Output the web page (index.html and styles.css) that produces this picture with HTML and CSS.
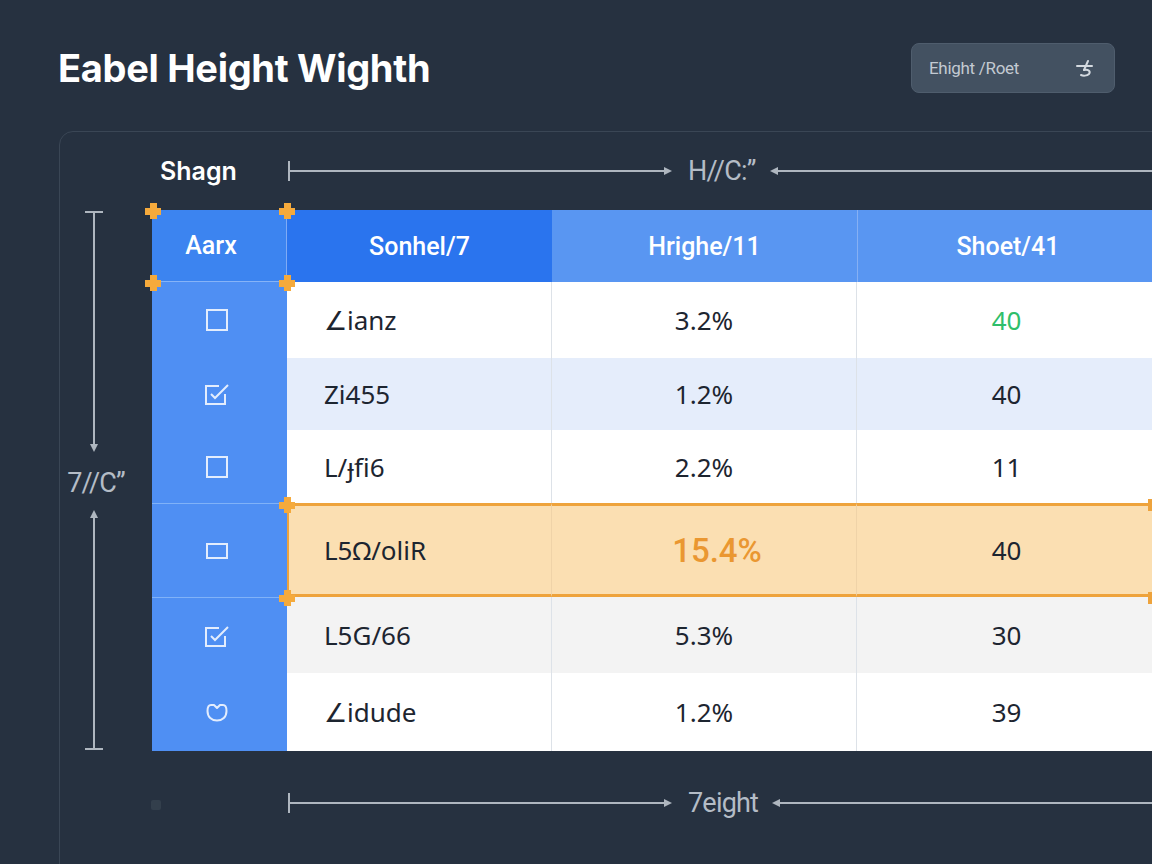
FILE: index.html
```html
<!DOCTYPE html>
<html>
<head>
<meta charset="utf-8">
<link rel="stylesheet" href="styles.css">
</head>
<body>
<div class="page">
  <header class="topbar">
    <h1 class="title">Eabel Height Wighth</h1>
    <button class="pill">
      <span class="pill-text">Ehight /Roet</span>
      <svg class="pill-icon" width="22" height="22" viewBox="0 0 22 22" fill="none" stroke="#d4dae0" stroke-width="2" stroke-linecap="round" stroke-linejoin="round">
        <path d="M3 9 H8"/>
        <path d="M8 9 H18"/>
        <path d="M14 4 L10 13"/>
        <path d="M10 13 C14 12 17 14 15 17 C13 19 9 19 7 18"/>
      </svg>
    </button>
  </header>

  <section class="panel">
    <div class="corner"></div>
    <div class="dimrow dim-top">
      <span class="dimlabel">Shagn</span>
      <div class="hdim">
        <i class="tick"></i><i class="line fixed"></i><i class="head-r"></i>
        <span class="dimtext">H//C:”</span>
        <i class="head-l"></i><i class="line grow"></i>
      </div>
    </div>

    <div class="vdim">
      <i class="vtick"></i><i class="vline"></i><i class="head-d"></i>
      <span class="vtext">7//C”</span>
      <i class="head-u"></i><i class="vline"></i><i class="vtick"></i>
    </div>

    <div class="tblwrap">
      <div class="tbl">
        <div class="th c1">Aarx</div>
        <div class="th c2">Sonhel/7</div>
        <div class="th c3">Hrighe/11</div>
        <div class="th c4">Shoet/41</div>

        <div class="cb"><svg width="24" height="24" viewBox="0 0 24 24" fill="none" stroke="#e3edfd" stroke-width="2"><rect x="2" y="2" width="20" height="20"/></svg></div>
        <div class="td name sep">∠ianz</div>
        <div class="td num sep">3.2%</div>
        <div class="td num last green">40</div>

        <div class="cb"><svg width="26" height="24" viewBox="0 0 26 24" fill="none" stroke="#e3edfd" stroke-width="2"><path d="M21 12 V22 H2 V4 H15"/><path d="M7 12 L11 16 L24 3"/></svg></div>
        <div class="td name sep alt">Zi455</div>
        <div class="td num sep alt">1.2%</div>
        <div class="td num last alt">40</div>

        <div class="cb"><svg width="24" height="24" viewBox="0 0 24 24" fill="none" stroke="#e3edfd" stroke-width="2"><rect x="2" y="2" width="20" height="20"/></svg></div>
        <div class="td name sep">L/ɟfi6</div>
        <div class="td num sep">2.2%</div>
        <div class="td num last">11</div>

        <div class="cb rowline"><svg width="24" height="20" viewBox="0 0 24 20" fill="none" stroke="#e3edfd" stroke-width="2"><rect x="2" y="3" width="20" height="14"/></svg></div>
        <div class="td name hl hl-first">L5Ω/oliR</div>
        <div class="td num hl hl-sep orange">15.4%</div>
        <div class="td num last hl">40</div>

        <div class="cb rowline"><svg width="26" height="24" viewBox="0 0 26 24" fill="none" stroke="#e3edfd" stroke-width="2"><path d="M21 12 V22 H2 V4 H15"/><path d="M7 12 L11 16 L24 3"/></svg></div>
        <div class="td name sep gray">L5G/66</div>
        <div class="td num sep gray">5.3%</div>
        <div class="td num last gray">30</div>

        <div class="cb"><svg width="24" height="24" viewBox="0 0 24 24" fill="none" stroke="#e3edfd" stroke-width="2" stroke-linejoin="round"><path d="M6 5 C3.5 5 2.5 7.5 2.5 11 C2.5 17 6.5 20.5 12 20.5 C17.5 20.5 21.5 17 21.5 11 C21.5 7.5 20.5 5 18 5 L15 5 L12 8 L9 5 Z"/></svg></div>
        <div class="td name sep">∠idude</div>
        <div class="td num sep">1.2%</div>
        <div class="td num last">39</div>
      </div>

      <i class="mark m1"></i>
      <i class="mark m2"></i>
      <i class="mark m3"></i>
      <i class="mark m4"></i>
      <i class="mark m5"></i>
      <i class="mark m6"></i>
      <i class="endmark e1"></i>
      <i class="endmark e2"></i>
    </div>

    <div class="corner"></div>
    <div class="dimrow dim-bottom">
      <span class="dimlabel"><i class="dot"></i></span>
      <div class="hdim">
        <i class="tick"></i><i class="line fixed"></i><i class="head-r"></i>
        <span class="dimtext">7eight</span>
        <i class="head-l"></i><i class="line grow"></i>
      </div>
    </div>
  </section>
</div>
</body>
</html>
```
FILE: styles.css
```css
html, body {
  margin: 0;
  padding: 0;
  width: 1152px;
  height: 864px;
  overflow: hidden;
  background: #263140;
}

.page {
  width: 1152px;
  height: 864px;
  overflow: hidden;
  font-family: Roboto, "Noto Sans", sans-serif;
}

.topbar {
  display: flex;
  justify-content: space-between;
  align-items: center;
  height: 50px;
  padding: 43px 37px 0 58px;
}

.title {
  margin: 0;
  font-family: Inter, Roboto, sans-serif;
  font-weight: 700;
  font-size: 38px;
  line-height: 50px;
  color: #ffffff;
  letter-spacing: -0.3px;
}

.pill {
  display: flex;
  align-items: center;
  justify-content: space-between;
  box-sizing: border-box;
  width: 204px;
  height: 50px;
  padding: 0 18px 0 17px;
  background: #435161;
  border: 1px solid #4f5d6d;
  border-radius: 8px;
}

.pill-text {
  font-family: Roboto, sans-serif;
  font-size: 17px;
  color: #c3cad2;
  letter-spacing: -0.3px;
}

.panel {
  margin: 38px 0 0 59px;
  width: 1110px;
  height: 800px;
  border: 1px solid #3a4655;
  border-radius: 14px;
  display: grid;
  grid-template-columns: 92px 1010px;
  grid-template-rows: 78px 541px auto;
}

.dimrow {
  display: flex;
  align-items: center;
}

.dim-top {
  padding-top: 0;
}

.dim-bottom {
  margin-top: 40px;
  height: 24px;
}

.dimlabel {
  width: 128px;
  padding-left: 8px;
  flex: none;
  font-family: Inter, Roboto, sans-serif;
  font-weight: 600;
  font-size: 25px;
  color: #ffffff;
  display: flex;
  align-items: center;
}

.dot {
  display: block;
  width: 10px;
  height: 10px;
  margin: 4px 0 0 -9px;
  border-radius: 2px;
  background: #333f4c;
}

.hdim {
  flex: 1;
  display: flex;
  align-items: center;
}

.tick {
  display: block;
  width: 2px;
  height: 20px;
  background: #aeb6bf;
}

.line {
  display: block;
  height: 2px;
  background: #aeb6bf;
}

.line.fixed {
  width: 374px;
}

.line.grow {
  flex: 1;
}

.head-r {
  display: block;
  width: 0;
  height: 0;
  border-left: 8px solid #aeb6bf;
  border-top: 4px solid transparent;
  border-bottom: 4px solid transparent;
}

.head-l {
  display: block;
  width: 0;
  height: 0;
  border-right: 8px solid #aeb6bf;
  border-top: 4px solid transparent;
  border-bottom: 4px solid transparent;
}

.dimtext {
  margin: 0 14px 0 16px;
  font-size: 27px;
  color: #b4bcc6;
  letter-spacing: -0.8px;
}

.vdim {
  width: 68px;
  display: flex;
  flex-direction: column;
  align-items: center;
  padding: 1px 0 1px;
}

.vtick {
  display: block;
  width: 18px;
  height: 2px;
  background: #aeb6bf;
}

.vline {
  display: block;
  width: 2px;
  flex: 1;
  background: #aeb6bf;
}

.head-d {
  display: block;
  width: 0;
  height: 0;
  border-top: 8px solid #aeb6bf;
  border-left: 4px solid transparent;
  border-right: 4px solid transparent;
}

.head-u {
  display: block;
  width: 0;
  height: 0;
  border-bottom: 8px solid #aeb6bf;
  border-left: 4px solid transparent;
  border-right: 4px solid transparent;
}

.vtext {
  margin: 16px 0 12px 4px;
  font-size: 27px;
  line-height: 30px;
  color: #b4bcc6;
  white-space: nowrap;
  letter-spacing: -0.8px;
}

.tblwrap {
  position: relative;
}

.tbl {
  display: grid;
  grid-template-columns: 135px 265px 305px 305px;
  grid-template-rows: 72px 76px 72px 73px 94px 76px 78px;
}

.th {
  display: flex;
  align-items: center;
  justify-content: center;
  color: #ffffff;
  font-family: Roboto, sans-serif;
  font-weight: 500;
  font-size: 25px;
  box-sizing: border-box;
}

.th.c1 {
  background: #3c84f0;
  border-right: 1px solid #7fabf5;
  border-bottom: 1px solid #86b3f7;
  padding-right: 16px;
}

.th.c2 {
  background: #2a74ee;
}

.th.c3 {
  background: #5996f2;
}

.th.c4 {
  background: #5996f2;
  border-left: 1px solid #86b0f4;
  padding-right: 4px;
}

.cb {
  background: #4f8ff3;
  display: flex;
  align-items: center;
  justify-content: center;
  box-sizing: border-box;
  padding-right: 6px;
}

.cb.rowline {
  border-top: 1px solid #80b2f8;
}

.td {
  display: flex;
  align-items: center;
  box-sizing: border-box;
  background: #ffffff;
  font-family: "Noto Sans", sans-serif;
  font-size: 26px;
  color: #1d2530;
}

.td.name {
  padding-left: 37px;
}

.td.num {
  justify-content: center;
}

.td.last {
  padding-right: 6px;
}

.td.sep {
  border-right: 1px solid #dde2e8;
}

.td.alt {
  background: #e5edfb;
}

.td.gray {
  background: #f3f3f3;
}

.td.green {
  color: #2fbe6a;
}

.td.hl {
  background: #fbdfb2;
  border-top: 3px solid #eea33c;
  border-bottom: 3px solid #eea33c;
}

.td.hl-first {
  border-left: 2px solid #eea33c;
  border-right: 1px solid #efd3a8;
  padding-left: 35px;
}

.td.hl-sep {
  border-right: 1px solid #efd3a8;
}

.td.orange {
  color: #ea9731;
  font-family: Roboto, sans-serif;
  font-weight: 500;
  font-size: 33px;
  padding-left: 26px;
}

.mark {
  position: absolute;
  width: 16px;
  height: 16px;
  margin: -8px 0 0 -8px;
  background:
    linear-gradient(#f5aa3c, #f5aa3c) center / 16px 7px no-repeat,
    linear-gradient(#f5aa3c, #f5aa3c) center / 7px 16px no-repeat;
}

.m1 { left: 1px; top: 1px; }
.m2 { left: 135px; top: 1px; }
.m3 { left: 1px; top: 73px; }
.m4 { left: 135px; top: 73px; }
.m5 { left: 135px; top: 295px; }
.m6 { left: 135px; top: 388px; }

.endmark {
  position: absolute;
  left: 996px;
  width: 6px;
  height: 12px;
  margin-top: -6px;
  background: #eea33c;
}

.e1 { top: 295px; }
.e2 { top: 388px; }
```
